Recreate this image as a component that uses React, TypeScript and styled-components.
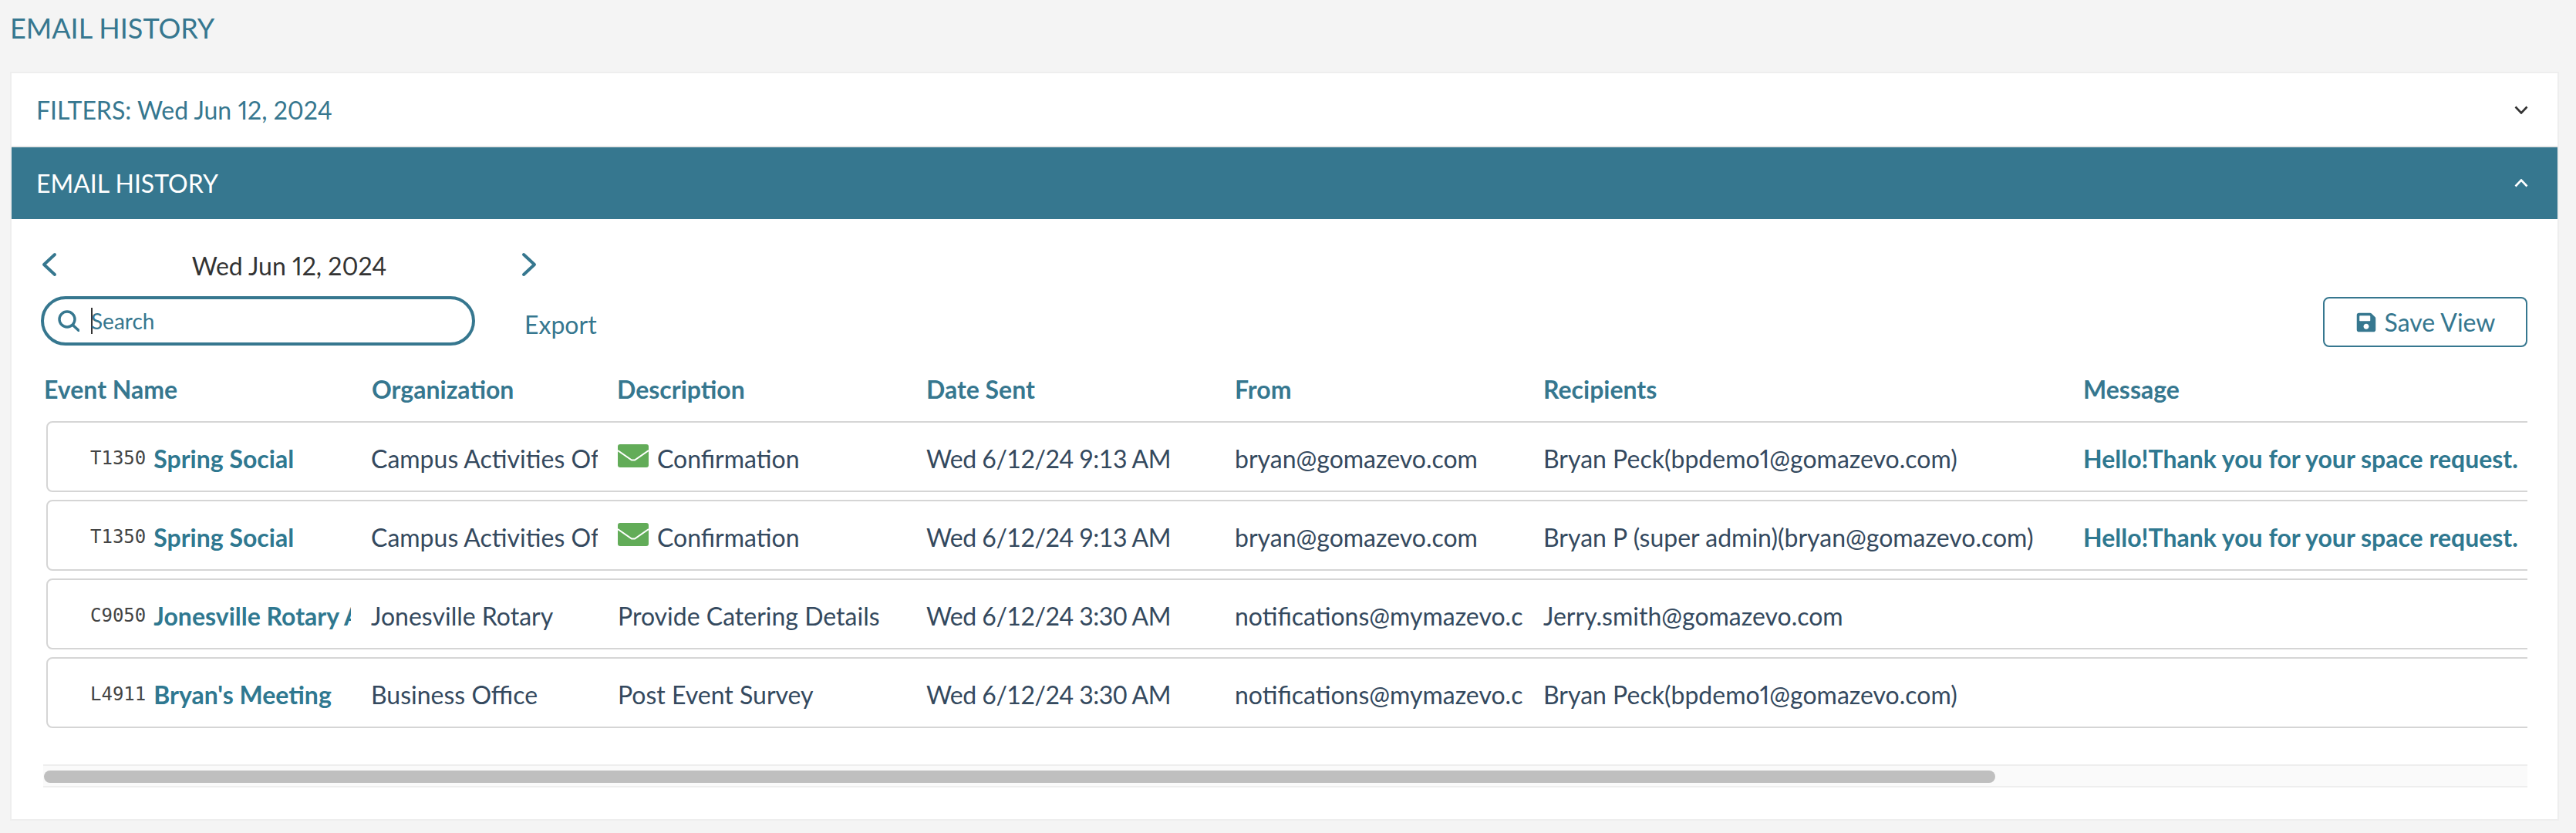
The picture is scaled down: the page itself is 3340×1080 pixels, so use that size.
import { createGlobalStyle, styled } from 'styled-components'
import { FaSave } from 'react-icons/fa'

interface EmailRow {
  code: string
  name: string
  organization: string
  description: string
  confirmed?: boolean
  dateSent: string
  from: string
  recipients: string
  message?: string
}

const rows: EmailRow[] = [
  {
    code: 'T1350',
    name: 'Spring Social',
    organization: 'Campus Activities Office',
    description: 'Confirmation',
    confirmed: true,
    dateSent: 'Wed 6/12/24 9:13 AM',
    from: 'bryan@gomazevo.com',
    recipients: 'Bryan Peck(bpdemo1@gomazevo.com)',
    message: 'Hello!Thank you for your space request.',
  },
  {
    code: 'T1350',
    name: 'Spring Social',
    organization: 'Campus Activities Office',
    description: 'Confirmation',
    confirmed: true,
    dateSent: 'Wed 6/12/24 9:13 AM',
    from: 'bryan@gomazevo.com',
    recipients: 'Bryan P (super admin)(bryan@gomazevo.com)',
    message: 'Hello!Thank you for your space request.',
  },
  {
    code: 'C9050',
    name: 'Jonesville Rotary Annual Dinner',
    organization: 'Jonesville Rotary',
    description: 'Provide Catering Details',
    dateSent: 'Wed 6/12/24 3:30 AM',
    from: 'notifications@mymazevo.com',
    recipients: 'Jerry.smith@gomazevo.com',
  },
  {
    code: 'L4911',
    name: "Bryan's Meeting",
    organization: 'Business Office',
    description: 'Post Event Survey',
    dateSent: 'Wed 6/12/24 3:30 AM',
    from: 'notifications@mymazevo.com',
    recipients: 'Bryan Peck(bpdemo1@gomazevo.com)',
  },
]

const headers = ['Event Name', 'Organization', 'Description', 'Date Sent', 'From', 'Recipients', 'Message']

const Chevron = ({ points }: { points: string }) => (
  <svg width="20" height="34" viewBox="0 0 20 34" fill="none">
    <polyline points={points} stroke="currentColor" strokeWidth="4" strokeLinecap="round" strokeLinejoin="round" />
  </svg>
)

const SearchGlyph = () => (
  <svg width="28" height="28" viewBox="0 0 28 28" fill="none" stroke="currentColor" strokeWidth="3.4" strokeLinecap="round">
    <circle cx="12" cy="12" r="10" />
    <line x1="20" y1="20" x2="27" y2="26.5" />
  </svg>
)

export default function App() {
  return (
    <>
      <GlobalStyle />
      <Page>
        <PageTitle>EMAIL HISTORY</PageTitle>
        <Panel>
          <FilterBar>
            <span>FILTERS: Wed Jun 12, 2024</span>
            <BarToggle>
              <svg width="18" height="11" viewBox="0 0 18 11" fill="none">
                <polyline points="1.5,1.5 9,9.5 16.5,1.5" stroke="currentColor" strokeWidth="2.6" />
              </svg>
            </BarToggle>
          </FilterBar>
          <SectionBar>
            <span>EMAIL HISTORY</span>
            <BarToggle>
              <svg width="18" height="11" viewBox="0 0 18 11" fill="none">
                <polyline points="1.5,9.5 9,1.5 16.5,9.5" stroke="currentColor" strokeWidth="2.6" />
              </svg>
            </BarToggle>
          </SectionBar>
          <Body>
            <DateNav>
              <NavArrow>
                <Chevron points="17,3 3,16 17,29" />
              </NavArrow>
              <DateLabel>Wed Jun 12, 2024</DateLabel>
              <NavArrow>
                <Chevron points="3,3 17,16 3,29" />
              </NavArrow>
            </DateNav>
            <Toolbar>
              <SearchBox>
                <SearchGlyph />
                <SearchInput>
                  <Caret />
                  Search
                </SearchInput>
              </SearchBox>
              <ExportLink>Export</ExportLink>
              <SaveButton>
                <FaSave size={28} />
                Save View
              </SaveButton>
            </Toolbar>
            <TableScroller>
              <Table>
                <HeaderRow>
                  {headers.map((h) => (
                    <HeaderCell key={h}>{h}</HeaderCell>
                  ))}
                </HeaderRow>
                {rows.map((row, i) => (
                  <Row key={i}>
                    <EventCell>
                      <EventCode>{row.code}</EventCode>
                      <EventName>{row.name}</EventName>
                    </EventCell>
                    <Cell>{row.organization}</Cell>
                    <Cell>
                      {row.confirmed && (
                        <EnvelopeIcon viewBox="0 0 40 30">
                          <rect width="40" height="30" rx="3" fill="#62ac58" />
                          <polyline points="0,8 18,20.5 22,20.5 40,8" fill="none" stroke="#fff" strokeWidth="2" />
                        </EnvelopeIcon>
                      )}
                      {row.description}
                    </Cell>
                    <DateCell>{row.dateSent}</DateCell>
                    <Cell>{row.from}</Cell>
                    <Cell>{row.recipients}</Cell>
                    <MessageCell>{row.message}</MessageCell>
                  </Row>
                ))}
              </Table>
            </TableScroller>
            <ScrollTrack>
              <ScrollThumb />
            </ScrollTrack>
          </Body>
        </Panel>
      </Page>
    </>
  )
}

const GlobalStyle = createGlobalStyle`
  html, body {
    margin: 0;
    background: #f4f4f4;
    font-family: Lato, "Liberation Sans", sans-serif;
  }
`

const Page = styled.div`
  width: 3340px;
  height: 1080px;
  overflow: hidden;
  box-sizing: border-box;
  padding: 0 22px 0 13px;
  color: #36778f;
  font-size: 32px;
  font-variant-numeric: proportional-nums;
`

const PageTitle = styled.h1`
  margin: 0;
  height: 93px;
  padding-top: 16px;
  box-sizing: border-box;
  font-size: 36px;
  line-height: 40px;
  font-weight: 400;
`

const Panel = styled.section`
  border: 2px solid #eeeeee;
  background: #fff;
`

const FilterBar = styled.div`
  display: flex;
  align-items: center;
  justify-content: space-between;
  height: 94px;
  padding: 0 38px 0 32px;
  border-bottom: 2px solid #e8e8e8;
  color: #36778f;
`

const SectionBar = styled(FilterBar)`
  height: 93px;
  border-bottom: 0;
  background: #36778f;
  color: #fff;
`

const BarToggle = styled.span`
  display: flex;
  color: #333;

  ${SectionBar} & {
    color: #fff;
  }
`

const Body = styled.div`
  padding: 35px 39px 41px 41px;
`

const DateNav = styled.div`
  display: flex;
  align-items: center;
  height: 50px;
  margin-left: -2px;
`

const NavArrow = styled.span`
  display: flex;
  color: #36778f;
`

const DateLabel = styled.div`
  width: 602px;
  text-align: center;
  color: #333;
`

const Toolbar = styled.div`
  display: flex;
  align-items: flex-start;
  margin: 15px 0 0 -3px;
  height: 67px;
`

const SearchBox = styled.div`
  display: flex;
  align-items: center;
  gap: 15px;
  width: 563px;
  height: 64px;
  box-sizing: border-box;
  padding-left: 18px;
  border: 4px solid #36778f;
  border-radius: 32px;
  color: #36778f;
`

const SearchInput = styled.div`
  display: flex;
  align-items: center;
  font-size: 28px;
`

const Caret = styled.span`
  width: 2px;
  height: 34px;
  margin-right: -2px;
  background: #333;
`

const ExportLink = styled.a`
  margin: 17px 0 0 64px;
  line-height: 40px;
`

const SaveButton = styled.button`
  display: flex;
  align-items: center;
  justify-content: center;
  gap: 10px;
  margin-left: auto;
  width: 265px;
  height: 65px;
  margin-top: 1px;
  border: 2px solid #36778f;
  border-radius: 8px;
  background: #fff;
  color: #36778f;
  font: inherit;
`

const TableScroller = styled.div`
  margin-top: 28px;
  overflow: hidden;
`

const Table = styled.div`
  width: 4100px;
  padding: 0 0 37px 1px;
  box-sizing: border-box;
`

const HeaderRow = styled.div`
  display: grid;
  grid-template-columns: 425px 318px 401px 400px 400px 700px 1455px;
  align-items: center;
  height: 50px;
  margin-bottom: 17px;
`

const HeaderCell = styled.div`
  font-weight: 700;
  color: #36778f;
`

const Row = styled.div`
  display: grid;
  grid-template-columns: 419px 320px 400px 400px 400px 700px 1450px;
  align-items: center;
  height: 92px;
  box-sizing: border-box;
  padding-top: 4px;
  margin: 0 0 10px 3px;
  border: 2px solid #d5d5d5;
  border-radius: 8px;
  color: #34495e;
`

const Cell = styled.div`
  display: flex;
  align-items: center;
  gap: 11px;
  overflow: hidden;
  margin-right: 26px;
  white-space: nowrap;
`

const DateCell = styled(Cell)`
  font-variant-numeric: tabular-nums;
  letter-spacing: -0.5px;
`

const EnvelopeIcon = styled.svg`
  flex: none;
  width: 40px;
  height: 30px;
  margin-top: -6px;
`

const EventCell = styled(Cell)`
  gap: 10px;
  padding-left: 55px;
`

const EventCode = styled.span`
  flex: none;
  font-family: "DejaVu Sans Mono", monospace;
  font-size: 24px;
  color: #444;
`

const EventName = styled.span`
  overflow: hidden;
  font-weight: 700;
  color: #2f7890;
`

const MessageCell = styled(Cell)`
  font-weight: 700;
  color: #2f7890;
`

const ScrollTrack = styled.div`
  height: 30px;
  box-sizing: border-box;
  padding: 6px 0 0 1px;
  background: #fafafa;
  border-top: 2px solid #eeeeee;
  border-bottom: 2px solid #eeeeee;
`

const ScrollThumb = styled.div`
  width: 2530px;
  height: 16px;
  border-radius: 8px;
  background: #bfbfbf;
`
